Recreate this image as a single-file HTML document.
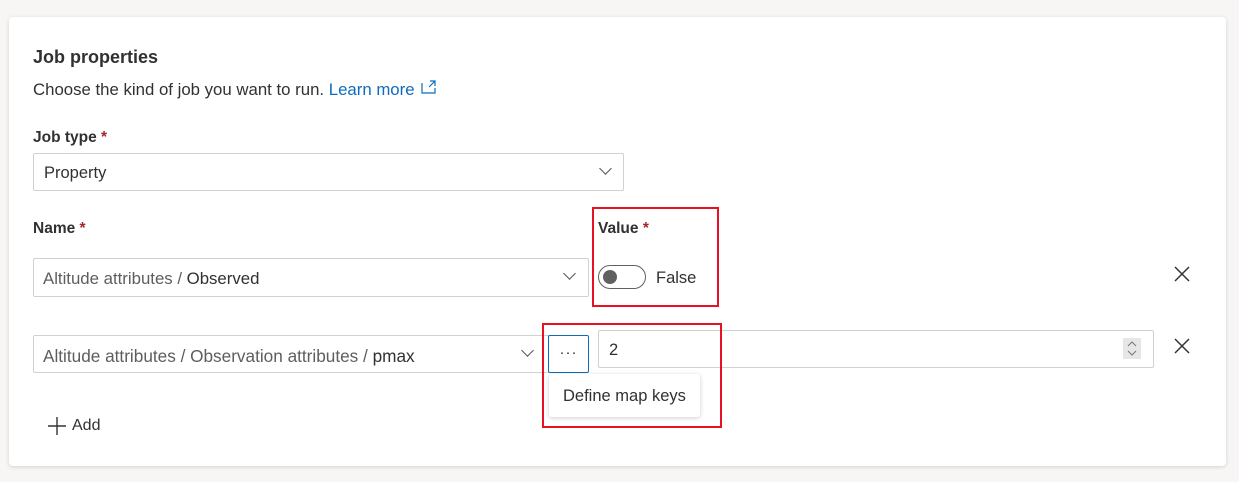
<!DOCTYPE html>
<html><head><meta charset="utf-8"><style>
*{box-sizing:border-box;margin:0;padding:0}
body{width:1239px;height:482px;background:#f7f6f5;font-family:"Liberation Sans",sans-serif;color:#323130;position:relative;overflow:hidden}
.card{position:absolute;left:9px;top:17px;width:1217px;height:449px;background:#fff;border-radius:4px;box-shadow:0 1px 4px rgba(0,0,0,.15)}
.a{position:absolute;white-space:nowrap}
.box{position:absolute;border:1px solid #d1d1d1;border-radius:2px;background:#fff}
.lbl{font-size:15.5px;font-weight:bold}
.req{color:#a4262c}
.chev{position:absolute;width:9px;height:9px;border-right:1.3px solid #555;border-bottom:1.3px solid #555;transform:rotate(45deg)}
.red{position:absolute;border:2px solid #e81123}
.x{position:absolute;width:18px;height:18px}
</style></head><body>
<div class="card"></div>
<div class="a" style="left:33px;top:47px;font-size:18px;font-weight:bold">Job properties</div>
<div class="a" style="left:33px;top:80px;font-size:16.8px">Choose the kind of job you want to run. <span style="color:#0f6cbd">Learn more</span></div>
<svg class="a" style="left:421px;top:80px" width="16" height="14" viewBox="0 0 16 14"><path d="M1 3v10h13V8M9 1h5v5M14 1L8 7" fill="none" stroke="#0f6cbd" stroke-width="1.2"/></svg>
<div class="a lbl" style="left:33px;top:129px">Job type <span class="req">*</span></div>
<div class="box" style="left:33px;top:153px;width:591px;height:38px"></div>
<div class="a" style="left:44px;top:164px;font-size:16.5px">Property</div>
<div class="chev" style="left:601px;top:164px"></div>
<div class="a lbl" style="left:33px;top:220px">Name <span class="req">*</span></div>
<div class="a lbl" style="left:598px;top:220px">Value <span class="req">*</span></div>
<div class="box" style="left:33px;top:258px;width:556px;height:39px"></div>
<div class="a" style="left:43px;top:269px;font-size:16.8px"><span style="color:#605e5c">Altitude attributes / </span>Observed</div>
<div class="chev" style="left:565px;top:269px"></div>
<div class="a" style="left:598px;top:265px;width:48px;height:24px;border:1px solid #616161;border-radius:12px"></div>
<div class="a" style="left:603px;top:270px;width:14px;height:14px;border-radius:50%;background:#616161"></div>
<div class="a" style="left:656px;top:269px;font-size:16.5px">False</div>
<svg class="x" style="left:1173px;top:265px" viewBox="0 0 18 18"><path d="M2 2L16 16M16 2L2 16" stroke="#333" stroke-width="1.5"/></svg>
<div class="box" style="left:33px;top:335px;width:520px;height:38px"></div>
<div class="a" style="left:43px;top:346px;font-size:17.2px"><span style="color:#605e5c">Altitude attributes / Observation attributes / </span>pmax</div>
<div class="chev" style="left:523px;top:346px"></div>
<div class="a" style="left:548px;top:335px;width:41px;height:38px;border:1px solid #0f6cbd;border-radius:2px;background:#fff;text-align:center;font-size:15px;line-height:34px;letter-spacing:1px">···</div>
<div class="box" style="left:598px;top:330px;width:556px;height:38px"></div>
<div class="a" style="left:609px;top:341px;font-size:16.5px">2</div>
<div class="a" style="left:1123px;top:338px;width:18px;height:21px;background:#e6e6e6"></div>
<svg class="a" style="left:1126px;top:340px" width="12" height="17" viewBox="0 0 12 17"><path d="M2 6L6 2L10 6M2 11L6 15L10 11" fill="none" stroke="#777" stroke-width="1"/></svg>
<svg class="x" style="left:1173px;top:337px" viewBox="0 0 18 18"><path d="M2 2L16 16M16 2L2 16" stroke="#333" stroke-width="1.5"/></svg>
<div class="a" style="left:549px;top:374px;width:151px;height:43px;background:#fff;border-radius:3px;box-shadow:0 1px 5px rgba(0,0,0,.2)"></div>
<div class="a" style="left:563px;top:387px;font-size:16.5px">Define map keys</div>
<div class="red" style="left:592px;top:207px;width:127px;height:100px"></div>
<div class="red" style="left:542px;top:323px;width:180px;height:105px"></div>
<svg class="a" style="left:47px;top:416px" width="20" height="20" viewBox="0 0 20 20"><path d="M10 1V19M1 10H19" stroke="#333" stroke-width="1.4"/></svg>
<div class="a" style="left:72px;top:417px;font-size:16px">Add</div>
</body></html>
